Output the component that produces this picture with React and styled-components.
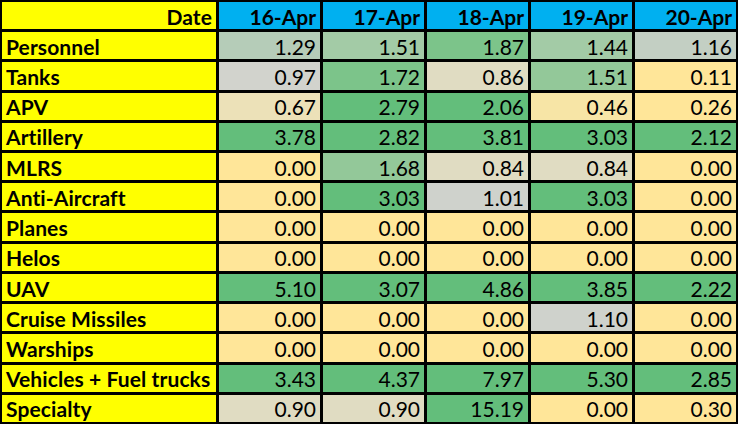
import React from 'react';
import styled, { createGlobalStyle } from 'styled-components';

const GlobalStyle = createGlobalStyle`
  html, body {
    margin: 0;
    padding: 0;
    background: #ffffff;
  }
  body {
    font-family: Lato, "Open Sans", sans-serif;
  }
`;

// colour scale used by the sheet's conditional formatting
const shades = {
  G: '#63be7b',
  G2: '#7cc48a',
  G3: '#93c899',
  G4: '#a3cba6',
  LG: '#b5ccb8',
  SG: '#c3cfc3',
  GR: '#d2d3cd',
  GC: '#cfd2cc',
  BE: '#e0dcc2',
  BE2: '#ece1b8',
  PY: '#f7e5a6',
  Y: '#ffe699',
};

const dates = ['16-Apr', '17-Apr', '18-Apr', '19-Apr', '20-Apr'];

const rows = [
  ['Personnel', [['1.29', 'LG'], ['1.51', 'G4'], ['1.87', 'G2'], ['1.44', 'G4'], ['1.16', 'SG']]],
  ['Tanks', [['0.97', 'GR'], ['1.72', 'G2'], ['0.86', 'BE'], ['1.51', 'G3'], ['0.11', 'Y']]],
  ['APV', [['0.67', 'BE2'], ['2.79', 'G'], ['2.06', 'G'], ['0.46', 'PY'], ['0.26', 'Y']]],
  ['Artillery', [['3.78', 'G'], ['2.82', 'G'], ['3.81', 'G'], ['3.03', 'G'], ['2.12', 'G']]],
  ['MLRS', [['0.00', 'Y'], ['1.68', 'G3'], ['0.84', 'BE'], ['0.84', 'BE'], ['0.00', 'Y']]],
  ['Anti-Aircraft', [['0.00', 'Y'], ['3.03', 'G'], ['1.01', 'GC'], ['3.03', 'G'], ['0.00', 'Y']]],
  ['Planes', [['0.00', 'Y'], ['0.00', 'Y'], ['0.00', 'Y'], ['0.00', 'Y'], ['0.00', 'Y']]],
  ['Helos', [['0.00', 'Y'], ['0.00', 'Y'], ['0.00', 'Y'], ['0.00', 'Y'], ['0.00', 'Y']]],
  ['UAV', [['5.10', 'G'], ['3.07', 'G'], ['4.86', 'G'], ['3.85', 'G'], ['2.22', 'G']]],
  ['Cruise Missiles', [['0.00', 'Y'], ['0.00', 'Y'], ['0.00', 'Y'], ['1.10', 'GC'], ['0.00', 'Y']]],
  ['Warships', [['0.00', 'Y'], ['0.00', 'Y'], ['0.00', 'Y'], ['0.00', 'Y'], ['0.00', 'Y']]],
  ['Vehicles + Fuel trucks', [['3.43', 'G'], ['4.37', 'G'], ['7.97', 'G'], ['5.30', 'G'], ['2.85', 'G']]],
  ['Specialty', [['0.90', 'BE'], ['0.90', 'BE'], ['15.19', 'G'], ['0.00', 'Y'], ['0.30', 'Y']]],
];

const App = () => (
  <>
    <GlobalStyle />
    <Sheet>
      <LabelCell $align="right">Date</LabelCell>
      {dates.map(d => (
        <HeadCell key={d}>{d}</HeadCell>
      ))}
      {rows.map(([label, values]) => (
        <React.Fragment key={label}>
          <LabelCell>{label}</LabelCell>
          {values.map(([v, shade], i) => (
            <ValueCell key={i} $shade={shades[shade]}>{v}</ValueCell>
          ))}
        </React.Fragment>
      ))}
    </Sheet>
  </>
);

const Sheet = styled.div`
  display: grid;
  grid-template-columns: 214px repeat(5, 1fr);
  grid-template-rows: repeat(14, 1fr);
  gap: 3px;
  width: 738px;
  height: 424px;
  padding: 2px;
  box-sizing: border-box;
  background: #000000;
`;

const Cell = styled.div`
  display: flex;
  align-items: center;
  padding: 1px 4px 0 4px;
  font-size: 21px;
  line-height: 1;
  color: #000;
  white-space: nowrap;
  overflow: hidden;
`;

const LabelCell = styled(Cell)`
  background: #ffff00;
  font-weight: 700;
  letter-spacing: 0.1px;
  justify-content: ${props => (props.$align === 'right' ? 'flex-end' : 'flex-start')};
`;

const HeadCell = styled(Cell)`
  background: #00b0f0;
  font-weight: 700;
  justify-content: flex-end;
`;

const ValueCell = styled(Cell)`
  background: ${props => props.$shade};
  justify-content: flex-end;
`;

export default App;
